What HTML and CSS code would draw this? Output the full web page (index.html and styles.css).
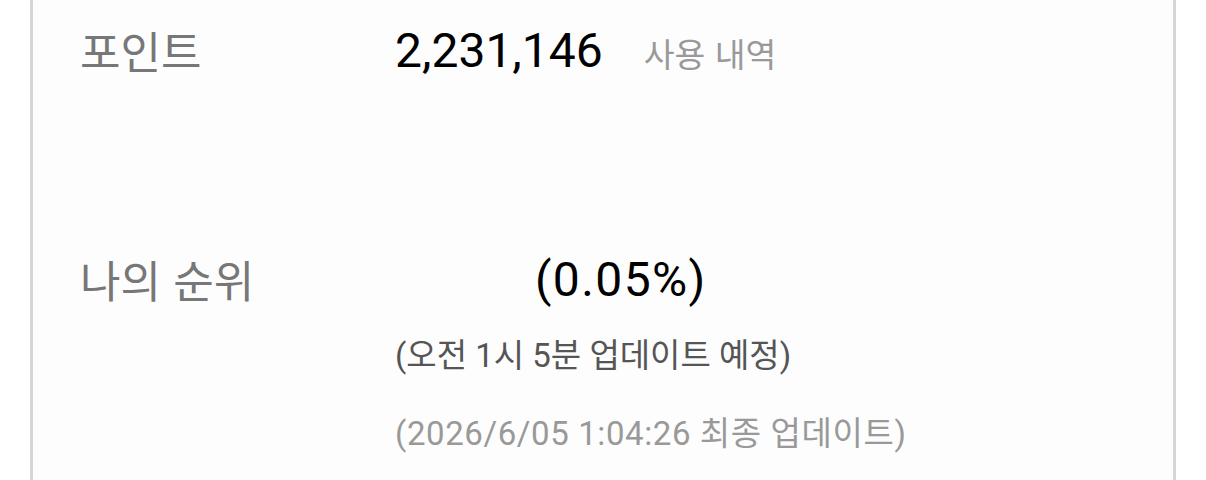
FILE: index.html
```html
<!DOCTYPE html>
<html lang="ko">
<head>
  <meta charset="utf-8">
  <title>포인트</title>
  <meta name="viewport" content="width=device-width, initial-scale=1.0">
  <link rel="stylesheet" href="styles.css">
</head>
<body>
  <div class="card">
    <div class="row row-point">
      <div class="label">포인트</div>
      <div class="value">
        <span class="amount">2,231,146</span>
        <a href="#" class="history">사용 내역</a>
      </div>
    </div>

    <div class="row row-empty"></div>

    <div class="row row-rank">
      <div class="label">나의 순위</div>
      <div class="value">
        <span class="rank-spacer"></span>
        <span class="amount rate">(0.05%)</span>
      </div>
    </div>

    <div class="notes">
      <p class="next-update">(오전 1시 5분 업데이트 예정)</p>
      <p class="last-update">(2026/6/05 1:04:26 최종 업데이트)</p>
    </div>
  </div>
</body>
</html>
```

FILE: styles.css
```css
html, body {
  margin: 0;
  padding: 0;
  background-color: #ffffff;
}
body {
  font-family: Roboto, "Noto Sans CJK KR", sans-serif;
  height: 480px;
  overflow: hidden;
}
.card {
  margin: 0 30px;
  min-height: 480px;
  border-left: 3px solid #d6d6d6;
  border-right: 3px solid #d6d6d6;
  background-color: #fdfdfd;
  padding-left: 47px;
  box-sizing: border-box;
}
.row {
  display: grid;
  grid-template-columns: 315px 1fr;
  align-items: center;
}
.row-point {
  height: 100px;
}
.row-empty {
  height: 129px;
}
.row-rank {
  height: 100px;
}
.label {
  font-family: "Noto Sans CJK KR", sans-serif;
  font-size: 44px;
  color: #777777;
}
.value {
  display: flex;
  align-items: baseline;
  gap: 41px;
}
.amount {
  font-size: 48px;
  color: #000000;
}
.rate {
  letter-spacing: 1.4px;
}
.history {
  font-family: "Noto Sans CJK KR", sans-serif;
  font-size: 33.5px;
  color: #999999;
  text-decoration: none;
}
.rank-spacer {
  width: 99px;
}
.notes {
  padding-left: 315px;
}
.notes p {
  margin: 0;
  font-size: 33px;
}
.next-update {
  color: #555555;
}
.last-update {
  color: #999999;
  letter-spacing: 0.6px;
  margin-top: 30px !important;
}
```
